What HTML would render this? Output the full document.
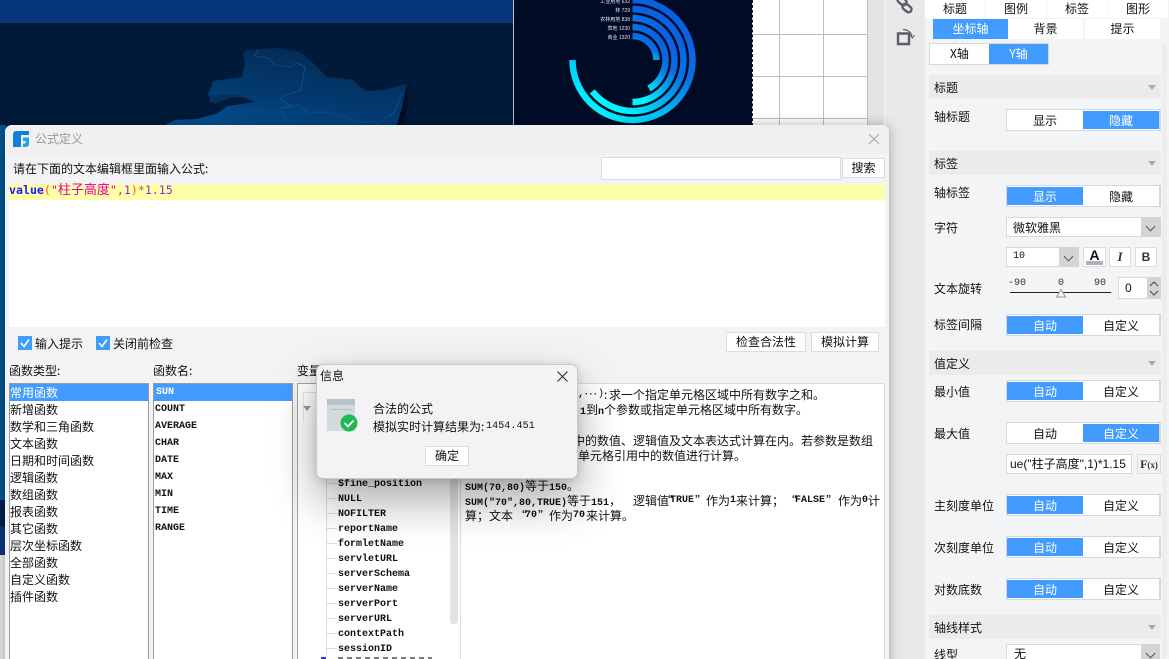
<!DOCTYPE html>
<html><head><meta charset="utf-8"><style>
*{box-sizing:border-box}
html,body{margin:0;padding:0;width:1169px;height:659px;overflow:hidden;background:#fff}
body{position:relative;font:12px/17px "WenQuanYi Zen Hei","Noto Sans CJK SC",sans-serif;color:#111}
.a{position:absolute;white-space:nowrap}
.c{text-align:center}
.l{position:absolute;background:#bdbdbd}
.cell{position:absolute;background:#fff;text-align:center;white-space:nowrap}
.on{background:#429cff;color:#fff}
.t{position:absolute;left:1006px;width:155px;height:22px;border:1px solid #d6d7da;background:#fff;border-right-width:2px}
.t span{position:absolute;top:1px;height:18px;text-align:center;line-height:20px}
.t span:first-child{left:0;width:76px}.t span:last-child{left:76px;width:76px}
.h{position:absolute;left:929px;width:232px;height:24px;background:#ebebeb;padding-left:5px;line-height:25px}
.h:after{content:"";position:absolute;right:5px;top:10px;border:4px solid transparent;border-top:5px solid #aaa;border-bottom:0}
.lb{position:absolute;left:934px;white-space:nowrap}
.btn{position:absolute;background:#fff;border:1px solid #dcdcde;text-align:center;white-space:nowrap}
.chev{position:absolute;width:7px;height:7px;border-right:1px solid #555;border-bottom:1px solid #555;transform:rotate(45deg)}
.list{position:absolute;top:383px;height:290px;width:140px;background:#fff;border:1px solid #9b9b9b;border-bottom:0;overflow:hidden}
.list div{height:17px;line-height:17px;white-space:nowrap}
.m{font-family:"Liberation Mono",monospace;font-size:10px;font-weight:bold}
.m div{padding-left:1px;line-height:18px}
.tr{position:absolute;left:338px;font:bold 10px/14px "Liberation Mono",monospace;white-space:nowrap}
.d{position:absolute;white-space:nowrap;line-height:15px}
.d i,i.d{font:bold 10px/15px "Liberation Mono",monospace}
.tk{position:absolute;left:326px;width:11px;height:1px;background:#ddd}
</style></head><body>

<!-- canvas -->
<div class="a" style="left:0;top:0;width:513px;height:659px;background:#011a3a"></div>
<div class="a" style="left:0;top:0;width:513px;height:23px;background:#06357a"></div>
<svg class="a" style="left:0;top:0" width="513" height="130">
<defs><linearGradient id="mp" x1=".7" y1="0" x2=".2" y2="1"><stop offset="0" stop-color="#032a54"/><stop offset=".6" stop-color="#033a70"/><stop offset="1" stop-color="#044f90"/></linearGradient></defs>
<path d="M397 125L402 107 407 84 383 90 365 91 353 80 327 77 313 63 300 52 277 48 248 50 243 53 245 63 242 77 213 81 208 96 230 94 243 96 255 102 227 106 218 113 197 119 175 120 165 125Z" fill="url(#mp)"/>
<path d="M208 87L208 96 230 94 243 96 255 102 240 97 230 98 215 104 210 102Z" fill="#02305f"/>
<path d="M407 84L402 107 397 125 403 125 408 105Z" fill="#000f24"/>
<path d="M258 50L255 56 268 58 275 65 290 67 297 63 305 67 303 78 301 90 298 91 283 96 280 99 292 107 280 108 282 110 285 118 298 125M280 108L297 105 308 113 325 112 345 117 362 123 375 121M375 125L395 112 402 92" fill="none" stroke="#12508a" stroke-width=".8"/>
</svg>
<div class="a" style="left:0;top:125px;width:6px;height:401px;background:#04558e"></div>
<div class="a" style="left:0;top:500px;width:6px;height:26px;background:#02204a"></div>
<div class="a" style="left:0;top:526px;width:6px;height:29px;background:#08357a"></div>
<div class="a" style="left:0;top:555px;width:6px;height:104px;background:#e6e6e6"></div>

<!-- chart panel -->
<div class="a" style="left:513px;top:0;width:1px;height:130px;background:#b8bcc4"></div>
<div class="a" style="left:514px;top:0;width:238px;height:130px;background:#000c26"></div>
<svg class="a" style="left:514px;top:0" width="238" height="126">
<defs><linearGradient id="g" x1="1" y1="0" x2=".3" y2="1"><stop offset="0" stop-color="#0a55e0"/><stop offset=".45" stop-color="#0a70e4"/><stop offset="1" stop-color="#00f6ff"/></linearGradient></defs>
<g transform="translate(-514 0)" fill="none" stroke="url(#g)" stroke-width="6.5">
<path d="M632.5 36A24 24 0 0 1 656.5 60"/>
<path d="M632.5 27A33 33 0 0 1 649 88.6"/>
<path d="M632.5 18A42 42 0 0 1 632.5 102"/>
<path d="M632.5 9A51 51 0 1 1 592.3 91.4"/>
<path d="M632.5 0A60 60 0 1 1 572.5 60"/>
</g>
<g fill="#dfe6f0" font-size="5" font-family="Liberation Sans,WenQuanYi Zen Hei,sans-serif" text-anchor="end">
<text x="116" y="3">工业用地 632</text><text x="116" y="12">林 729</text><text x="116" y="21">农林用地 838</text><text x="116" y="30">草地 1230</text><text x="116" y="39">商业 1320</text>
</g>
</svg>
<div class="a" style="left:752px;top:0;width:0;height:126px;border-left:1px dashed #111"></div>

<!-- grid -->
<div class="l" style="left:779px;top:0;width:1px;height:126px"></div>
<div class="l" style="left:823px;top:0;width:1px;height:126px"></div>
<div class="l" style="left:867px;top:0;width:1px;height:126px"></div>
<div class="l" style="left:753px;top:34px;width:115px;height:1px"></div>
<div class="l" style="left:753px;top:76px;width:115px;height:1px"></div>
<div class="l" style="left:753px;top:118px;width:115px;height:1px"></div>

<!-- toolbar strips -->
<div class="a" style="left:868px;top:0;width:16px;height:659px;background:#e3e3e3"></div>
<div class="a" style="left:884px;top:0;width:1px;height:659px;background:#f4f4f4"></div>
<div class="a" style="left:885px;top:0;width:40px;height:659px;background:#e9e9e9"></div>
<svg class="a" style="left:885px;top:0" width="40" height="60" fill="none" stroke="#5b5e68" stroke-width="2.400">
<rect x="12" y="-2" width="10" height="6" rx="3" transform="rotate(40 17 1)"/>
<rect x="17" y="5" width="10" height="6" rx="3" transform="rotate(40 22 8)"/>
<path d="M13 33.500H24V44H13Z"/>
<path d="M18 29.500A9 9 0 0 1 27 36" stroke-width="1.200"/><path d="M25 35L27.500 38 29.500 35" stroke-width="1"/>
</svg>

<!-- right panel -->
<div class="a" style="left:925px;top:0;width:244px;height:659px;background:#f3f4f6"></div>
<div class="cell" style="left:925px;top:0;width:60px;height:18px;line-height:17px">标题</div>
<div class="cell" style="left:986px;top:0;width:60px;height:18px;line-height:17px">图例</div>
<div class="cell" style="left:1047px;top:0;width:60px;height:18px;line-height:17px">标签</div>
<div class="cell" style="left:1108px;top:0;width:60px;height:18px;line-height:17px">图形</div>
<div class="cell on" style="left:933px;top:19px;width:75px;height:20px;line-height:20px">坐标轴</div>
<div class="cell" style="left:1008px;top:19px;width:75px;height:20px;line-height:20px">背景</div>
<div class="cell" style="left:1085px;top:19px;width:75px;height:20px;line-height:20px">提示</div>
<div class="a" style="left:929px;top:43px;width:120px;height:22px;background:#d6d7da"></div>
<div class="cell" style="left:930px;top:44px;width:59px;height:20px;line-height:20px">X轴</div>
<div class="cell on" style="left:989px;top:44px;width:59px;height:20px;line-height:20px">Y轴</div>
<div class="a" style="left:1162px;top:44px;width:5px;height:615px;background:#ecedef;border-radius:3px"></div>

<div class="h" style="top:75px">标题</div>
<div class="lb" style="top:108px">轴标题</div>
<div class="t" style="top:109px"><span>显示</span><span class="on">隐藏</span></div>
<div class="h" style="top:151px">标签</div>
<div class="lb" style="top:184px">轴标签</div>
<div class="t" style="top:185px"><span class="on">显示</span><span>隐藏</span></div>
<div class="lb" style="top:219px">字符</div>
<div class="a" style="left:1006px;top:217px;width:155px;height:20px;background:#fff;border:1px solid #d6d7da;padding-left:6px;line-height:19px">微软雅黑</div>
<div class="a" style="left:1141px;top:217px;width:20px;height:20px;background:#d3d4d6"></div>
<div class="chev" style="left:1147px;top:223px"></div>
<div class="a" style="left:1006px;top:247px;width:73px;height:20px;background:#fff;border:1px solid #d6d7da;padding-left:6px;line-height:18px;font-family:'Liberation Mono',monospace;font-size:10px">10</div>
<div class="a" style="left:1059px;top:247px;width:20px;height:20px;background:#d3d4d6"></div>
<div class="chev" style="left:1065px;top:253px"></div>
<div class="btn" style="left:1083px;top:247px;width:23px;height:20px;font:bold 14px/14px 'Liberation Sans',sans-serif">A<div style="position:absolute;left:2px;top:13px;width:17px;height:4px;background:#aeb2bb"></div></div>
<div class="btn" style="left:1109px;top:247px;width:22px;height:20px;font:italic bold 13px/18px 'Liberation Serif',serif;color:#333">I</div>
<div class="btn" style="left:1135px;top:247px;width:22px;height:20px;font:bold 12px/18px 'Liberation Sans',sans-serif;color:#333">B</div>
<div class="lb" style="top:280px">文本旋转</div>
<div class="a" style="left:1008px;top:278px;font:10px/11px 'Liberation Mono',monospace;color:#333">-90</div>
<div class="a" style="left:1058px;top:278px;font:10px/11px 'Liberation Mono',monospace;color:#333">0</div>
<div class="a" style="left:1094px;top:278px;font:10px/11px 'Liberation Mono',monospace;color:#333">90</div>
<div class="a" style="left:1010px;top:292px;width:101px;height:1px;background:#222"></div>
<svg class="a" style="left:1055px;top:289px" width="12" height="9"><path d="M6 .5L10.500 8H1.500Z" fill="#f3f4f6" stroke="#999"/></svg>
<div class="a" style="left:1118px;top:277px;width:43px;height:22px;background:#fff;border:1px solid #d6d7da;padding-left:6px;line-height:20px;font-family:'Liberation Sans',sans-serif">0</div>
<div class="a" style="left:1147px;top:277px;width:14px;height:22px;background:#d3d4d6"></div>
<svg class="a" style="left:1147px;top:277px" width="14" height="22" fill="none" stroke="#444"><path d="M3 9L7 5 11 9M3 14L7 18 11 14"/></svg>
<div class="lb" style="top:316px">标签间隔</div>
<div class="t" style="top:314px"><span class="on">自动</span><span>自定义</span></div>
<div class="h" style="top:351px">值定义</div>
<div class="lb" style="top:383px">最小值</div>
<div class="t" style="top:380px"><span class="on">自动</span><span>自定义</span></div>
<div class="lb" style="top:425px">最大值</div>
<div class="t" style="top:422px"><span>自动</span><span class="on">自定义</span></div>
<div class="a" style="left:1006px;top:454px;width:126px;height:20px;background:#fff;border:1px solid #d6d7da;overflow:hidden;line-height:18px;padding-left:3px;font-family:'Liberation Sans','WenQuanYi Zen Hei',sans-serif">ue("柱子高度",1)*1.15</div>
<div class="btn" style="left:1137px;top:454px;width:24px;height:20px;background:#f3f4f6;font:bold 12px/18px 'Liberation Serif',serif;color:#333">F<span style="font-size:9px">(x)</span></div>
<div class="lb" style="top:497px">主刻度单位</div>
<div class="t" style="top:494px"><span class="on">自动</span><span>自定义</span></div>
<div class="lb" style="top:539px">次刻度单位</div>
<div class="t" style="top:536px"><span class="on">自动</span><span>自定义</span></div>
<div class="lb" style="top:581px">对数底数</div>
<div class="t" style="top:578px"><span class="on">自动</span><span>自定义</span></div>
<div class="h" style="top:615px">轴线样式</div>
<div class="lb" style="top:646px">线型</div>
<div class="a" style="left:1006px;top:644px;width:154px;height:20px;background:#fff;border:1px solid #d6d7da;padding-left:7px;line-height:17px">无</div>
<div class="a" style="left:1141px;top:644px;width:19px;height:15px;background:#d3d4d6"></div>
<div class="chev" style="left:1147px;top:650px"></div>

<!-- formula dialog -->
<div class="a" style="left:5px;top:125px;width:884px;height:560px;background:#f3f3f5;border-radius:7px 7px 0 0;box-shadow:0 0 12px rgba(0,0,0,.3);overflow:hidden">
<div class="a" style="left:0;top:0;width:884px;height:29px;background:#f0f0f0"></div>
</div>
<svg class="a" style="left:13px;top:131px" width="16" height="16"><path d="M3 0H16V4H8V16H0V3A3 3 0 0 1 3 0Z" fill="#0f80dd"/><path d="M10 6.500H16V13A3 3 0 0 1 13 16H10V12.500H12.500V10H10Z" fill="#1ca4ec"/></svg>
<div class="a" style="left:35px;top:130px;color:#999">公式定义</div>
<svg class="a" style="left:868px;top:133px" width="12" height="12" stroke="#a5a5a5" fill="none"><path d="M1 1L11 11M11 1L1 11"/></svg>
<div class="a" style="left:13px;top:160px">请在下面的文本编辑框里面输入公式:</div>
<div class="a" style="left:601px;top:157px;width:240px;height:23px;background:#fff;border:1px solid #dcdcde"></div>
<div class="btn" style="left:842px;top:158px;width:43px;height:20px;line-height:18px">搜索</div>
<div class="a" style="left:9px;top:184px;width:876px;height:16px;background:#ffffaa"></div>
<div class="a" style="left:9px;top:200px;width:876px;height:127px;background:#fff"></div>
<div class="a" style="left:9px;top:182px;font:11.600px/17px 'DejaVu Sans Mono','WenQuanYi Zen Hei',monospace"><b style="color:#1b1bff">value</b><span style="color:#ff5a1f">(</span><span style="color:#e000a8">"<span style="font-size:13px">柱子高度</span>"</span><span style="color:#8a5a2a">,</span><span style="color:#8a2be2">1</span><span style="color:#ff5a1f">)</span><span style="color:#a07030">*</span><span style="color:#8a2be2">1.15</span></div>

<div class="a" style="left:18px;top:336px;width:14px;height:14px;background:#429cff"></div>
<svg class="a" style="left:18px;top:336px" width="14" height="14" fill="none" stroke="#fff" stroke-width="1.600"><path d="M3 7L6 10.500 11 3.500"/></svg>
<div class="a" style="left:35px;top:335px">输入提示</div>
<div class="a" style="left:96px;top:336px;width:14px;height:14px;background:#429cff"></div>
<svg class="a" style="left:96px;top:336px" width="14" height="14" fill="none" stroke="#fff" stroke-width="1.600"><path d="M3 7L6 10.500 11 3.500"/></svg>
<div class="a" style="left:113px;top:335px">关闭前检查</div>
<div class="btn" style="left:726px;top:332px;width:80px;height:20px;line-height:18px">检查合法性</div>
<div class="btn" style="left:811px;top:332px;width:68px;height:20px;line-height:18px">模拟计算</div>

<div class="a" style="left:9px;top:362px">函数类型:</div>
<div class="a" style="left:153px;top:362px">函数名:</div>
<div class="a" style="left:297px;top:362px">变量</div>

<div class="list" style="left:9px">
<div class="on">常用函数</div><div>新增函数</div><div>数学和三角函数</div><div>文本函数</div><div>日期和时间函数</div><div>逻辑函数</div><div>数组函数</div><div>报表函数</div><div>其它函数</div><div>层次坐标函数</div><div>全部函数</div><div>自定义函数</div><div>插件函数</div>
</div>
<div class="list m" style="left:153px">
<div class="on" style="padding-left:2px">SUN</div><div>COUNT</div><div>AVERAGE</div><div>CHAR</div><div>DATE</div><div>MAX</div><div>MIN</div><div>TIME</div><div>RANGE</div>
</div>

<div class="a" style="left:297px;top:383px;width:164px;height:290px;background:#fff;border:1px solid #a5a5a5;border-width:1px 1px 0 1px"></div>
<div class="a" style="left:460px;top:383px;width:425px;height:290px;background:#fff;border:1px solid #dcdcde"></div>
<div class="a" style="left:303px;top:392px;width:150px;height:1px;background:#e6e6e6"></div>
<div class="a" style="left:303px;top:392px;width:1px;height:30px;background:#e6e6e6"></div>
<div class="a" style="left:303px;top:406px;border:4px solid transparent;border-top:5px solid #999;border-bottom:0"></div>
<div class="a" style="left:326px;top:470px;width:1px;height:184px;background:#ddd"></div>
<div class="a" style="left:450px;top:440px;width:8px;height:184px;background:#e3e3e3;border-radius:3px"></div>
<div class="tk" style="top:483px"></div><div class="tk" style="top:498px"></div><div class="tk" style="top:513px"></div><div class="tk" style="top:528px"></div><div class="tk" style="top:543px"></div><div class="tk" style="top:558px"></div><div class="tk" style="top:573px"></div><div class="tk" style="top:588px"></div><div class="tk" style="top:603px"></div><div class="tk" style="top:618px"></div><div class="tk" style="top:633px"></div><div class="tk" style="top:648px"></div>
<div class="tr" style="top:478px">$fine_position</div>
<div class="tr" style="top:493px">NULL</div>
<div class="tr" style="top:508px">NOFILTER</div>
<div class="tr" style="top:523px">reportName</div>
<div class="tr" style="top:538px">formletName</div>
<div class="tr" style="top:553px">servletURL</div>
<div class="tr" style="top:568px">serverSchema</div>
<div class="tr" style="top:583px">serverName</div>
<div class="tr" style="top:598px">serverPort</div>
<div class="tr" style="top:613px">serverURL</div>
<div class="tr" style="top:628px">contextPath</div>
<div class="tr" style="top:643px">sessionID</div>
<div class="a" style="left:321px;top:657px;width:5px;height:2px;background:#3c3c9c"></div>
<div class="a" style="left:338px;top:657px;width:94px;height:2px;background:repeating-linear-gradient(90deg,#444 0 5px,#fff 5px 9px);opacity:.7"></div>

<i class="d" style="left:578px;top:387px">,</i>
<div class="d" style="left:585px;top:387px;font-family:'Liberation Sans',sans-serif;font-weight:bold;font-size:9px;letter-spacing:1.500px">···</div>
<i class="d" style="left:598px;top:387px;font-weight:normal">)</i>
<div class="d" style="left:604px;top:387px">:</div>
<div class="d" style="left:609px;top:387px">求一个指定单元格区域中所有数字之和。</div>
<div class="d" style="left:580px;top:402px"><i>1</i>到<i>n</i>个参数或指定单元格区域中所有数字。</div>
<div class="d" style="left:573px;top:433px">中的数值、逻辑值及文本表达式计算在内。若参数是数组</div>
<div class="d" style="left:566px;top:448px">或单元格引用中的数值进行计算。</div>
<div class="d" style="left:465px;top:478px"><i>SUM(70,80)</i>等于<i>150</i>。</div>

<div class="d" style="left:465px;top:493px"><i>SUM("70",80,TRUE)</i>等于<i>151</i>&#xFF0C;</div>
<div class="d" style="left:633px;top:493px">逻辑值</div>
<div class="d" style="left:661px;top:493px">“</div>
<i class="d" style="left:670px;top:493px">TRUE</i>
<div class="d" style="left:695px;top:493px">”</div>
<div class="d" style="left:706px;top:493px">作为</div>
<i class="d" style="left:730px;top:493px">1</i>
<div class="d" style="left:736px;top:493px">来计算&#xFF1B;</div>
<div class="d" style="left:785px;top:493px">“</div>
<i class="d" style="left:795px;top:493px">FALSE</i>
<div class="d" style="left:826px;top:493px">”</div>
<div class="d" style="left:838px;top:493px">作为</div>
<i class="d" style="left:862px;top:493px">0</i>
<div class="d" style="left:868px;top:493px">计</div>

<div class="d" style="left:465px;top:508px">算&#xFF1B;文本</div>
<div class="d" style="left:515px;top:508px">“</div>
<i class="d" style="left:525px;top:508px">70</i>
<div class="d" style="left:538px;top:508px">”</div>
<div class="d" style="left:549px;top:508px">作为</div>
<i class="d" style="left:573px;top:508px">70</i>
<div class="d" style="left:586px;top:508px">来计算。</div>

<!-- info dialog -->
<div class="a" style="left:316px;top:364px;width:262px;height:115px;background:#f3f3f5;border:1px solid #c9c9c9;border-radius:7px;box-shadow:0 22px 45px rgba(0,0,0,.33),0 2px 10px rgba(0,0,0,.15)"></div>
<div class="a" style="left:320px;top:367px">信息</div>
<svg class="a" style="left:557px;top:371px" width="11" height="11" stroke="#222" fill="none"><path d="M.5 .5L10.500 10.500M10.500 .5L.5 10.500"/></svg>
<div class="a" style="left:327px;top:399px;width:28px;height:32px;background:#d3dade"></div>
<div class="a" style="left:327px;top:399px;width:28px;height:6px;background:#b9c1c7"></div>
<div class="a" style="left:331px;top:409px;width:20px;height:1px;background:repeating-linear-gradient(90deg,#a6afb5 0 2px,transparent 2px 3px)"></div>
<svg class="a" style="left:340px;top:414px" width="18" height="18"><circle cx="9" cy="9" r="8.500" fill="#1db954"/><path d="M4.500 9L8 12.500 13.500 6.500" fill="none" stroke="#fff" stroke-width="1.800"/></svg>
<div class="a" style="left:373px;top:400px">合法的公式</div>
<div class="a" style="left:373px;top:418px">模拟实时计算结果为:</div>
<div class="a" style="left:486px;top:418px;font:10px/17px 'Liberation Mono',monospace;letter-spacing:.1px">1454.451</div>
<div class="btn" style="left:425px;top:446px;width:44px;height:20px;line-height:18px">确定</div>
</body></html>
